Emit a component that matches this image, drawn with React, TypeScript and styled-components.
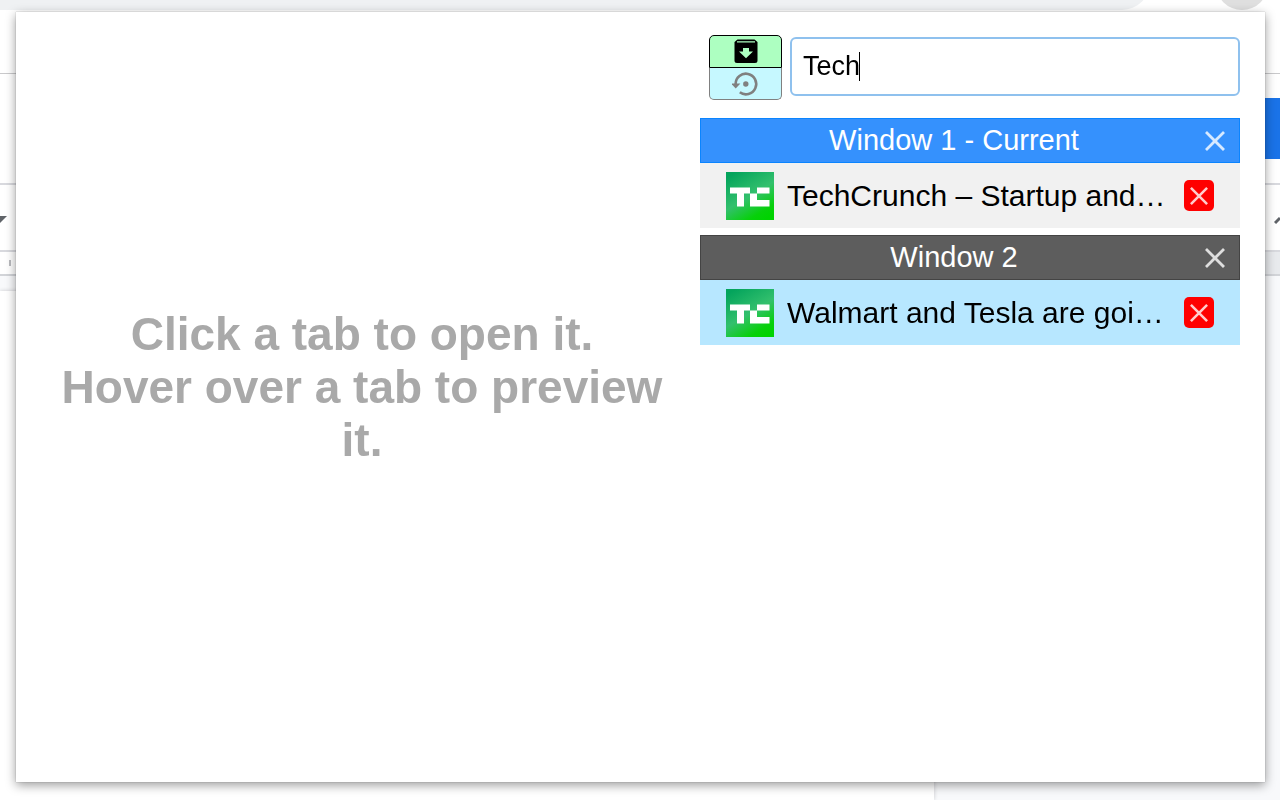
import React, { useState } from "react";
import styled, { createGlobalStyle } from "styled-components";

const GlobalStyle = createGlobalStyle`
  * { box-sizing: border-box; }
  body {
    margin: 0;
    overflow: hidden;
    background: #fff;
    color: #000;
    font-family: "Liberation Sans", Arial, sans-serif;
  }
  button { font: inherit; cursor: pointer; }
`;

/* Browser page behind the popup */
const Page = styled.div`
  display: flex;
  flex-direction: column;
  min-height: 100vh;
`;

const BrowserBar = styled.div`
  display: flex;
  align-items: flex-end;
  height: 10px;
  overflow: hidden;
`;

const AddressPill = styled.div`
  flex: 1;
  height: 56px;
  margin-right: 66px;
  border-radius: 0 28px 28px 0;
  background: #eff1f3;
`;

const Avatar = styled.div`
  width: 52px;
  height: 52px;
  margin-right: 12px;
  border-radius: 50%;
  background: #dfdfdf;
`;

const BookmarkSpace = styled.div`
  height: 64px;
  border-bottom: 1px solid #c9c9cb;
`;

const DocHeader = styled.div`
  display: flex;
  align-items: center;
  justify-content: flex-end;
  height: 111px;
  border-bottom: 2px solid #d8d9de;
`;

const ShareBlock = styled.div`
  width: 120px;
  height: 61px;
  background: #1a73e8;
`;

const DocToolbar = styled.div`
  display: flex;
  align-items: center;
  justify-content: space-between;
  height: 67px;
  padding-top: 4px;
  border-bottom: 2px solid #d8d9de;
`;

const Ruler = styled.div`
  display: flex;
  align-items: center;
  height: 24px;
  padding-left: 9px;
  border-bottom: 2px solid #d2d4d8;
  background: linear-gradient(to right, #fff 73%, #e8eaed 73%);
`;

const RulerTick = styled.div`
  width: 2px;
  height: 6px;
  background: #b9babf;
`;

const DocCanvas = styled.div`
  display: flex;
  flex: 1;
  padding-top: 15px;
  background: #f8f9fb;
`;

const Paper = styled.div`
  width: 73%;
  background: #fff;
  box-shadow: 0 0 4px #c8c9cc;
`;

/* Popup */
const Popup = styled.main`
  position: fixed;
  inset: 12px 15px 18px 16px;
  display: grid;
  grid-template-columns: minmax(0, 1fr) 540px;
  padding: 23px 25px 24px 24px;
  background: #fff;
  box-shadow: 0 0 1px rgba(0, 0, 0, 0.35), 0 3px 10px rgba(0, 0, 0, 0.4);
`;

const Preview = styled.section`
  display: flex;
  align-items: center;
  justify-content: center;
  padding: 0 16px 18px 0;
`;

const Hint = styled.p`
  margin: 0;
  color: #a9a9a9;
  font-size: 46px;
  font-weight: 700;
  line-height: 53px;
  text-align: center;
`;

const Sidebar = styled.section`
  display: flex;
  flex-direction: column;
  gap: 18px;
  min-width: 0;
`;

const SearchRow = styled.div`
  display: flex;
  align-items: flex-start;
  gap: 8px;
  padding-left: 9px;
`;

const ActionStack = styled.div`
  display: flex;
  flex-direction: column;
  width: 73px;
`;

const ActionButton = styled.button<{ $kind: "archive" | "restore" }>`
  display: flex;
  align-items: center;
  justify-content: center;
  height: ${(p) => (p.$kind === "archive" ? 33 : 32)}px;
  padding: ${(p) => (p.$kind === "archive" ? "0 0 1px" : "0")};
  border: 1px solid ${(p) => (p.$kind === "archive" ? "#000" : "#808080")};
  border-top-width: ${(p) => (p.$kind === "archive" ? 1 : 0)}px;
  border-radius: ${(p) => (p.$kind === "archive" ? "5px 5px 0 0" : "0 0 5px 5px")};
  background: ${(p) => (p.$kind === "archive" ? "#adffc1" : "#c6f8ff")};
  color: ${(p) => (p.$kind === "archive" ? "#000" : "#808080")};
`;

const SearchBox = styled.div`
  position: relative;
  flex: 1;
  margin-top: 2px;
`;

const SearchInput = styled.input`
  display: block;
  width: 100%;
  height: 59px;
  padding: 0 11px;
  border: 2px solid #8fc1ee;
  border-radius: 6px;
  outline: 0;
  background: #fff;
  color: #000;
  font: 27px/32px "Liberation Sans", Arial, sans-serif;
  caret-color: transparent;
`;

const Caret = styled.span`
  position: absolute;
  top: 15px;
  left: 69px;
  width: 1px;
  height: 29px;
  background: #000;
`;

const WindowList = styled.div`
  display: flex;
  flex-direction: column;
  gap: 7px;
`;

const WindowHeader = styled.header<{ $current: boolean }>`
  display: flex;
  align-items: center;
  height: 45px;
  padding-right: 14px;
  border: 1px solid ${(p) => (p.$current ? "#0a84ff" : "#444")};
  background: ${(p) => (p.$current ? "#3591fd" : "#5d5d5d")};
`;

const WindowTitle = styled.h2`
  flex: 1;
  margin: 0;
  padding: 0 0 2px 2px;
  color: #fff;
  font-size: 29px;
  font-weight: 400;
  line-height: 32px;
  text-align: center;
`;

const CloseWindow = styled.button`
  display: flex;
  padding: 0;
  border: 0;
  background: none;
  color: rgba(255, 255, 255, 0.8);
`;

const TabRow = styled.div<{ $selected: boolean }>`
  display: flex;
  align-items: center;
  gap: 13px;
  height: 65px;
  padding: 0 26px;
  background: ${(p) => (p.$selected ? "#b7e7ff" : "#f1f1f1")};
`;

const TabTitle = styled.span`
  flex: 1;
  min-width: 0;
  overflow: hidden;
  font-size: 30px;
  line-height: 36px;
  white-space: nowrap;
`;

const CloseTab = styled.button`
  display: flex;
  align-items: center;
  justify-content: center;
  width: 30px;
  height: 31px;
  padding: 0;
  border: 0;
  border-radius: 5px;
  background: #f00;
  color: rgba(255, 255, 255, 0.8);
`;

const Cross = ({ size }: { size: number }) => (
  <svg width={size} height={size} viewBox="0 0 20 20" fill="none" stroke="currentColor" strokeWidth="2.8" aria-hidden="true">
    <path d="M1 1 19 19M19 1 1 19" />
  </svg>
);

const ArchiveIcon = () => (
  <svg width="24" height="24" viewBox="0 0 24 24" aria-hidden="true">
    <path
      fill="currentColor"
      fillRule="evenodd"
      d="M3.5 .5h17L23.500 3V21.500a2.500 2.500 0 0 1-2.500 2.500H3A2.500 2.500 0 0 1 .5 21.500V3ZM3 2.200h18v1.200H3ZM9 9v3.500H5l7 6.800 7-6.800h-4V9Z"
    />
  </svg>
);

const RestoreIcon = () => (
  <svg width="28" height="26" viewBox="0 0 28 26" fill="none" aria-hidden="true">
    <path d="M3.600 13.500V13A10.300 10.300 0 1 1 7.800 21.300" stroke="currentColor" strokeWidth="2.600" />
    <path d="M-1 12.500h9.400L3.700 17.600Z" fill="currentColor" />
    <circle cx="13.800" cy="13" r="2.700" fill="currentColor" />
  </svg>
);

const Favicon = ({ id }: { id: string }) => (
  <svg width="48" height="48" viewBox="0 0 48 48" aria-hidden="true">
    <defs>
      <linearGradient id={id} x1="0.2" y1="0" x2="0.8" y2="1">
        <stop offset="0" stopColor="#04a45c" />
        <stop offset="0.5" stopColor="#33c06d" />
        <stop offset="0.85" stopColor="#07d00b" />
        <stop offset="1" stopColor="#00d300" />
      </linearGradient>
    </defs>
    <rect width="48" height="48" fill={`url(#${id})`} />
    <path
      fill="#fff"
      d="M4 15.500H24V21.500H18V34.500H11V21.500H4ZM31 15.500H43.500V21.500H31ZM24 21.500H31V28H43.500V34.500H24Z"
    />
  </svg>
);

const windows = [
  { title: "Window 1 - Current", current: true, tab: "TechCrunch – Startup and…" },
  { title: "Window 2", current: false, tab: "Walmart and Tesla are goi…" },
];

export default function App() {
  const [query, setQuery] = useState("Tech");

  return (
    <>
      <GlobalStyle />
      <Page aria-hidden="true">
        <BrowserBar>
          <AddressPill />
          <Avatar />
        </BrowserBar>
        <BookmarkSpace />
        <DocHeader>
          <ShareBlock />
        </DocHeader>
        <DocToolbar>
          <svg width="8" height="8" viewBox="0 0 8 8">
            <path d="M0 0h7L0 7Z" fill="#5f6368" />
          </svg>
          <svg width="6" height="12" viewBox="0 0 6 12">
            <path d="M1 9 6 4" stroke="#5f6368" strokeWidth="3" />
          </svg>
        </DocToolbar>
        <Ruler>
          <RulerTick />
        </Ruler>
        <DocCanvas>
          <Paper />
        </DocCanvas>
      </Page>
      <Popup>
        <Preview>
          <Hint>
            Click a tab to open it.
            <br />
            Hover over a tab to preview it.
          </Hint>
        </Preview>
        <Sidebar>
          <SearchRow>
            <ActionStack>
              <ActionButton $kind="archive" type="button" aria-label="Save windows">
                <ArchiveIcon />
              </ActionButton>
              <ActionButton $kind="restore" type="button" aria-label="Restore windows">
                <RestoreIcon />
              </ActionButton>
            </ActionStack>
            <SearchBox>
              <SearchInput
                type="text"
                aria-label="Search tabs"
                value={query}
                onChange={(e) => setQuery(e.target.value)}
              />
              <Caret />
            </SearchBox>
          </SearchRow>
          <WindowList>
            {windows.map((w, i) => (
              <article key={w.title}>
                <WindowHeader $current={w.current}>
                  <WindowTitle>{w.title}</WindowTitle>
                  <CloseWindow type="button" aria-label="Close window">
                    <Cross size={20} />
                  </CloseWindow>
                </WindowHeader>
                <TabRow $selected={!w.current}>
                  <Favicon id={`favicon-${i}`} />
                  <TabTitle>{w.tab}</TabTitle>
                  <CloseTab type="button" aria-label="Close tab">
                    <Cross size={18} />
                  </CloseTab>
                </TabRow>
              </article>
            ))}
          </WindowList>
        </Sidebar>
      </Popup>
    </>
  );
}
